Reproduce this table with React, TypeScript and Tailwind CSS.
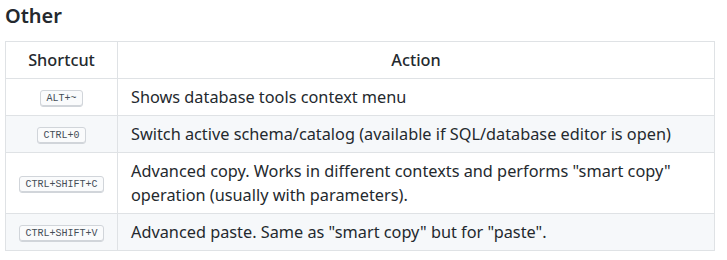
const rows = [
  { keys: "ALT+~", action: "Shows database tools context menu" },
  { keys: "CTRL+0", action: "Switch active schema/catalog (available if SQL/database editor is open)" },
  {
    keys: "CTRL+SHIFT+C",
    action:
      'Advanced copy. Works in different contexts and performs "smart copy" operation (usually with parameters).',
  },
  { keys: "CTRL+SHIFT+V", action: 'Advanced paste. Same as "smart copy" but for "paste".' },
]

export default function App() {
  return (
    <div className="min-h-[260px] bg-white px-[5px] text-[#24292e] font-['Noto_Sans',sans-serif]">
      <h3 className="pt-[1px] text-[20px] leading-[30px] font-semibold">Other</h3>
      <table className="mt-[10px] w-[710px] table-fixed border-collapse text-[16.3px] leading-[24px]">
        <colgroup>
          <col className="w-[112px]" />
          <col />
        </colgroup>
        <thead>
          <tr className="bg-white">
            <th className="border border-[#dfe2e5] px-[13px] py-[6px] font-medium">Shortcut</th>
            <th className="border border-[#dfe2e5] px-[13px] py-[6px] font-medium">Action</th>
          </tr>
        </thead>
        <tbody>
          {rows.map((row, i) => (
            <tr key={row.keys} className={i % 2 === 1 ? "bg-[#f6f8fa]" : "bg-white"}>
              <td className="border border-[#dfe2e5] px-[8px] py-[6px] text-center">
                <kbd className="inline-block rounded-[3px] border border-[#d1d5da] bg-[#fafbfc] px-[5px] pt-[3px] pb-[2px] align-middle font-['Liberation_Mono',monospace] text-[10px] leading-[10px] text-[#444d56] shadow-[inset_0_-1px_0_#d1d5da]">
                  {row.keys}
                </kbd>
              </td>
              <td className="border border-[#dfe2e5] px-[13px] py-[6px]">{row.action}</td>
            </tr>
          ))}
        </tbody>
      </table>
    </div>
  )
}
